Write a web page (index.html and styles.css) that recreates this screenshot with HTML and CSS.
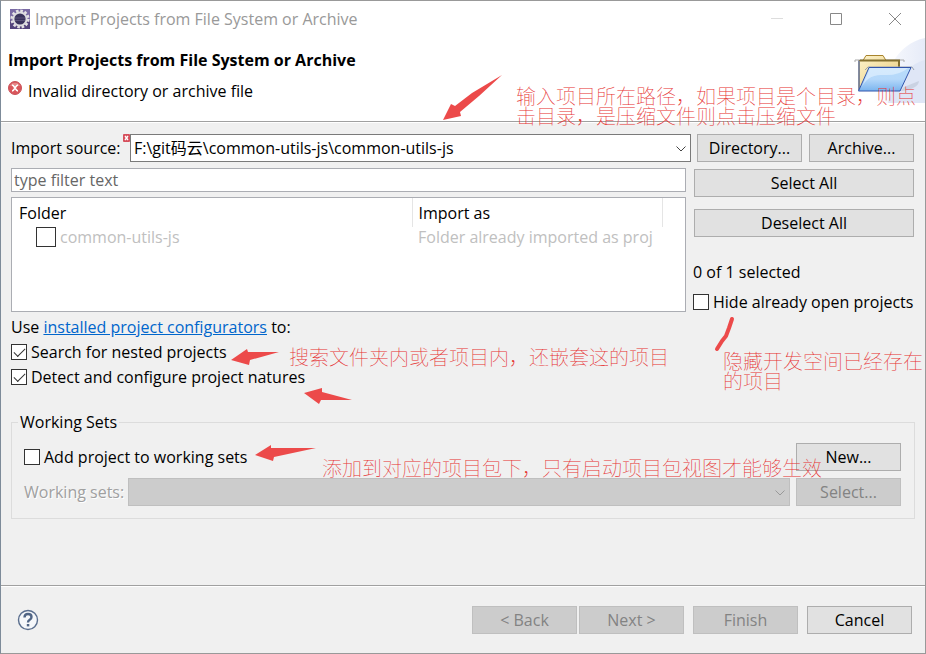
FILE: index.html
```html
<!DOCTYPE html>
<html lang="en">
<head>
<meta charset="utf-8">
<title>Import Projects from File System or Archive</title>
<link rel="stylesheet" href="styles.css">
</head>
<body>
<main class="dialog">
  <header class="titlebar">
    <svg class="app-icon" width="20" height="20" viewBox="0 0 20 20" aria-hidden="true">
      <rect width="20" height="20" fill="#7a6aa4"/>
      <rect y="11" width="20" height="9" fill="#54447c"/>
      <circle cx="10" cy="10" r="8.300" fill="none" stroke="#e4e2e4" stroke-width="2.600" stroke-dasharray="2.600 1.750"/>
      <circle cx="10" cy="10" r="6.600" fill="#3a335c" stroke="#dddcdf" stroke-width="2"/>
      <path d="M5 9h10M5 11.500h10" stroke="#5a5379" stroke-width="1"/>
    </svg>
    <span class="titlebar-text">Import Projects from File System or Archive</span>
    <div class="window-controls">
      <button class="window-button" aria-label="Minimize" disabled><svg width="14" height="14" viewBox="0 0 14 14"><path d="M1 6.500h12" stroke="#ddd"/></svg></button>
      <button class="window-button" aria-label="Maximize"><svg width="14" height="14" viewBox="0 0 14 14"><path d="M1.500 1.500h11v11h-11z" fill="none" stroke="#888"/></svg></button>
      <button class="window-button" aria-label="Close"><svg width="14" height="14" viewBox="0 0 14 14"><path d="M1 1l12 12M13 1L1 13" stroke="#888"/></svg></button>
    </div>
  </header>

  <section class="banner">
    <div class="banner-text">
      <h1>Import Projects from File System or Archive</h1>
      <p class="message">
        <svg width="14" height="14" viewBox="0 0 14 14" aria-hidden="true"><circle cx="7" cy="7" r="6.500" fill="#d9565b" stroke="#c9525a"/><path d="M2 5a5.500 5.500 0 0 1 10 0z" fill="#e58688"/><path d="M4 4c2.500 0 3.500 6 6 6M10 4c-2.500 0-3.500 6-6 6" fill="none" stroke="#fff" stroke-width="1.600"/></svg>
        <span>Invalid directory or archive file</span>
      </p>
    </div>
    <svg class="banner-art" width="75" height="66" viewBox="0 0 75 66" aria-hidden="true">
      <defs>
        <linearGradient id="sky" x2="1" y2="0"><stop offset="0" stop-color="#fff"/><stop offset="1" stop-color="#e6ebf8"/></linearGradient>
        <linearGradient id="manila" x2="1" y2="1"><stop offset="0" stop-color="#fdf3cb"/><stop offset="1" stop-color="#e9ca78"/></linearGradient>
        <linearGradient id="flap" x2="0" y2="1"><stop offset="0" stop-color="#b9dcfa"/><stop offset=".5" stop-color="#b5d8fa"/><stop offset="1" stop-color="#7ab4ee"/></linearGradient>
      </defs>
      <path d="M75 1C46 7 38 34 22 66h53z" fill="url(#sky)"/>
      <path d="M75 23C56 28 42 47 38 66h37z" fill="#dfe6f6"/>
      <path d="M54 50l15-6q-1 8-18 10z" fill="#a9b3c5" opacity=".4"/>
      <path d="M5 25v-2h49v2" fill="none" stroke="#aaa"/>
      <path d="M9 53V23.500h4l3-5h17l3 5h13v30z" fill="url(#manila)" stroke="#a8842d"/>
      <path d="M9 53V23.500" stroke="#3355ac"/>
      <path d="M10 23.500h39v7" fill="none" stroke="#84702f" stroke-width="2"/>
      <path d="M15 33l3-3h44l2 3" fill="none" stroke="#9aa3ad"/>
      <path d="M8.500 54L19 30.500h42L50 54z" fill="url(#flap)" stroke="#3355ac"/>
      <path d="M11 52q6-15 22-14t25-7H20z" fill="#e8f4ff" opacity=".6"/>
    </svg>
  </section>

  <form class="content">
    <div class="source-row">
      <label for="source">Import source:</label>
      <span class="combo source-combo">
        <svg class="error-badge" width="7" height="8" viewBox="0 0 7 8" aria-hidden="true"><rect width="7" height="8" rx="1" fill="#d64f5c"/><path d="M2 2l3 4M5 2L2 6" stroke="#fff" stroke-width="1.300"/></svg>
        <select id="source"><option>F:\git码云\common-utils-js\common-utils-js</option></select>
        <svg class="chevron" width="12" height="8" viewBox="0 0 12 8" aria-hidden="true"><path d="M1.500 1.500l4.500 4.500 4.500-4.500" fill="none" stroke="#444"/></svg>
      </span>
      <button type="button">Directory...</button>
      <button type="button" class="archive">Archive...</button>
    </div>

    <div class="browser">
      <div class="tree-column">
        <input class="filter" type="text" placeholder="type filter text" aria-label="Filter">
        <div class="tree">
          <table>
            <thead><tr><th class="folder-col">Folder</th><th class="import-col">Import as</th><th></th></tr></thead>
            <tbody><tr>
              <td><label class="tree-item"><input type="checkbox" class="check check-large"><span>common-utils-js</span></label></td>
              <td>Folder already imported as proj</td><td></td>
            </tr></tbody>
          </table>
        </div>
      </div>
      <div class="side-column">
        <button type="button">Select All</button>
        <button type="button">Deselect All</button>
        <p class="count">0 of 1 selected</p>
        <label class="option"><input type="checkbox" class="check"><span>Hide already open projects</span></label>
      </div>
    </div>

    <div class="options">
      <p>Use <a href="#configurators">installed project configurators</a> to:</p>
      <label class="option"><input type="checkbox" class="check" checked><span>Search for nested projects</span></label>
      <label class="option"><input type="checkbox" class="check" checked><span>Detect and configure project natures</span></label>
    </div>

    <fieldset class="working-sets">
      <legend>Working Sets</legend>
      <div class="set-row">
        <label class="option"><input type="checkbox" class="check"><span>Add project to working sets</span></label>
        <button type="button">New...</button>
      </div>
      <div class="set-row">
        <label for="sets" class="disabled-label">Working sets:</label>
        <span class="combo">
          <select id="sets" disabled><option></option></select>
          <svg class="chevron" width="12" height="8" viewBox="0 0 12 8" aria-hidden="true"><path d="M1.500 1.500l4.500 4.500 4.500-4.500" fill="none" stroke="#999"/></svg>
        </span>
        <button type="button" disabled>Select...</button>
      </div>
    </fieldset>
  </form>

  <footer class="footer">
    <button class="help" aria-label="Help"><svg width="22" height="22" viewBox="0 0 22 22"><circle cx="11" cy="11" r="9.500" fill="#f5f7fa" stroke="#5a6e8e" stroke-width="1.400"/><path d="M7.500 8.500Q7.500 5 11 5t3.500 3q0 1.700-1.800 2.800T11 13.500" fill="none" stroke="#506585" stroke-width="2.400"/><path d="M9.800 15h2.500v2.400H9.800z" fill="#506585"/></svg></button>
    <div class="actions">
      <button disabled>&lt; Back</button>
      <button disabled>Next &gt;</button>
      <button class="apart" disabled>Finish</button>
      <button class="apart">Cancel</button>
    </div>
  </footer>

  <div class="notes" lang="zh-CN">
    <svg class="arrows" width="926" height="654" viewBox="0 0 926 654" aria-hidden="true">
      <g fill="#ec4a4a">
        <path d="M443 120l8-16 4 2 17-13 30-18-23 21-19 16 1 4z"/>
        <path d="M231 360l16-11 1 3h31l-29 8-1 5z"/>
        <path d="M304 393l18-5v4l30 8h-31l-2 4z"/>
        <path d="M255 455l16-10v3h45l-42 9-1 4z"/>
      </g>
      <path d="M732 319l-3 9-3 8-4 5-5 8" fill="none" stroke="#ec4a4a" stroke-width="4" stroke-linecap="round" stroke-linejoin="round"/>
    </svg>
    <p class="note note-source">输入项目所在路径，如果项目是个目录，则点<br>击目录，是压缩文件则点击压缩文件</p>
    <p class="note note-nested">搜索文件夹内或者项目内，还嵌套这的项目</p>
    <p class="note note-hide">隐藏开发空间已经存在<br>的项目</p>
    <p class="note note-sets">添加到对应的项目包下，只有启动项目包视图才能够生效</p>
  </div>
</main>
</body>
</html>
```
FILE: styles.css
```css
* { box-sizing: border-box; }

body {
  margin: 0;
  background: #f0f0f0;
  color: #000;
  font: 16px/20px "Open Sans", "Noto Sans CJK SC", sans-serif;
}

h1, p { margin: 0; }

button, input, select { font: inherit; color: inherit; }

.dialog {
  position: relative;
  display: flex;
  flex-direction: column;
  min-height: 100vh;
  border: 1px solid #999;
  border-left-color: #7d8b99;
  overflow: hidden;
}

.titlebar {
  display: flex;
  align-items: center;
  height: 36px;
  padding: 0 1px 0 9px;
  background: #fff;
  color: #999;
}

.titlebar-text { margin-left: 5px; }

.window-controls { display: flex; margin-left: auto; }

.window-button {
  display: flex;
  align-items: center;
  justify-content: center;
  width: 59px;
  height: 36px;
  padding: 0;
  border: 0;
  background: none;
}

.banner {
  display: flex;
  justify-content: space-between;
  height: 85px;
  border-bottom: 1px solid #a0a0a0;
  background: #fff;
}

.banner-text { padding: 13px 0 0 7px; }

h1 { font-size: 16px; line-height: 20px; }

.message {
  display: flex;
  gap: 6px;
  margin-top: 11px;
}

.content {
  flex: 1;
  padding: 11px 10px 0 10px;
  border-top: 1px solid #fff;
}

button {
  width: 105px;
  height: 28px;
  padding: 0;
  border: 1px solid #adadad;
  background: #e1e1e1;
}

button:disabled {
  border-color: #bfbfbf;
  background: #ccc;
  color: #838383;
}

.window-button:disabled { background: none; }

.source-row {
  display: flex;
  align-items: center;
  padding-right: 1px;
}

.source-row label { width: 119px; }

.source-row .archive { margin-left: 7px; }

.combo {
  position: relative;
  display: flex;
  flex: 1;
  margin-right: 6px;
}

.combo select {
  width: 100%;
  height: 28px;
  padding: 0 24px 1px 3px;
  border: 1px solid #7a7a7a;
  border-radius: 0;
  background: #fff;
  appearance: none;
}

.combo select:disabled {
  border-color: #bfbfbf;
  background: #ccc;
  opacity: 1;
}

.chevron { position: absolute; top: 11px; right: 4px; }

.error-badge { position: absolute; top: 0; left: -7px; }

.browser {
  display: flex;
  gap: 8px;
  margin-top: 6px;
  padding-right: 1px;
}

.tree-column { flex: 1; }

.filter {
  display: block;
  width: 100%;
  height: 24px;
  padding: 0 2px;
  border: 1px solid #abadb3;
  background: #fff;
}

.filter::placeholder { color: #666; opacity: 1; }

.tree {
  height: 115px;
  margin-top: 5px;
  border: 1px solid #abadb3;
  background: #fff;
}

table {
  width: 100%;
  border-collapse: collapse;
  table-layout: fixed;
}

th {
  height: 29px;
  padding: 0 6px;
  border-right: 1px solid #e5e5e5;
  font-weight: 400;
  text-align: left;
}

th:last-child { border: 0; }

.folder-col { width: 400px; padding-left: 7px; }

.import-col { width: 250px; }

td {
  padding: 0 6px;
  color: #c0c0c0;
  white-space: nowrap;
}

.tree-item {
  display: flex;
  align-items: center;
  gap: 4px;
  padding-left: 18px;
}

.side-column {
  display: flex;
  flex-direction: column;
  width: 220px;
  padding-top: 1px;
}

.side-column button { width: 100%; margin-bottom: 12px; }

.count { margin: 13px 0 10px; }

.side-column .count,
.side-column .option { margin-left: -1px; }

.option {
  display: flex;
  align-items: center;
  gap: 4px;
  white-space: nowrap;
}

.check {
  flex: none;
  width: 16px;
  height: 16px;
  margin: 0;
  border: 1px solid #333;
  background: #fff;
  appearance: none;
}

.check-large { width: 20px; height: 20px; }

.check:checked::before {
  content: "";
  display: block;
  width: 10px;
  height: 5px;
  margin: 3px 2px;
  border: solid #333;
  border-width: 0 0 1px 1px;
  transform: rotate(-45deg);
}

.options {
  display: flex;
  flex-direction: column;
  gap: 5px;
  margin-top: 5px;
}

a { color: #0066cc; }

.working-sets {
  display: flex;
  flex-direction: column;
  gap: 7px;
  margin: 25px 0 0;
  padding: 11px 13px 12px 12px;
  border: 1px solid #dcdcdc;
}

legend {
  margin-left: -6px;
  padding: 0 2px;
}

.set-row { display: flex; align-items: center; }

.set-row > button { margin-left: auto; }

.disabled-label {
  width: 104px;
  color: #a0a0a0;
  text-shadow: 1px 1px #fff;
}

.footer {
  display: flex;
  align-items: center;
  justify-content: space-between;
  height: 68px;
  padding: 0 13px 0 16px;
  border-top: 1px solid #a0a0a0;
  box-shadow: inset 0 1px #fff;
}

.footer .help {
  display: flex;
  width: 22px;
  height: 22px;
  border: 0;
  background: none;
}

.actions { display: flex; gap: 2px; }

.actions .apart { margin-left: 7px; }

.notes {
  position: absolute;
  inset: -1px;
  pointer-events: none;
}

.arrows { display: block; }

.note {
  position: absolute;
  color: #e63232;
  font: 100 20px/20px "Noto Sans CJK SC", sans-serif;
  white-space: nowrap;
}

.note-source { top: 86px; left: 516px; }
.note-nested { top: 347px; left: 289px; }
.note-hide { top: 351px; left: 723px; }
.note-sets { top: 458px; left: 322px; }
```
